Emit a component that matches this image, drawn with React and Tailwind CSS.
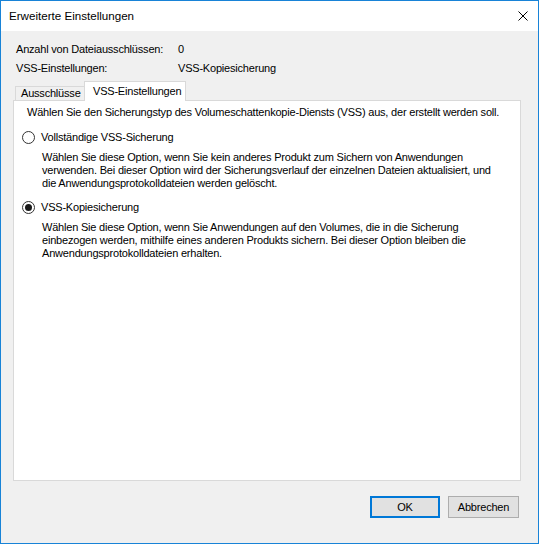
import React from 'react';

const font = "font-['Liberation_Sans',Arial,sans-serif]";

function Radio({ checked }) {
  return (
    <span className="flex h-[13px] w-[13px] shrink-0 items-center justify-center rounded-full border border-[#333333] bg-white">
      {checked ? <span className="h-[7px] w-[7px] rounded-full bg-[#1a1a1a]" /> : null}
    </span>
  );
}

function Option({ checked, label, lines }) {
  return (
    <div>
      <div className="flex items-center gap-[6px]">
        <Radio checked={checked} />
        <span className="whitespace-nowrap leading-[13px]">{label}</span>
      </div>
      <div className="mt-[7px] pl-[20px] leading-[13px]">
        {lines.map((l) => (
          <div key={l} className="whitespace-nowrap">{l}</div>
        ))}
      </div>
    </div>
  );
}

export default function App() {
  return (
    <div className={`flex h-[544px] w-[539px] flex-col border border-[#1883d7] bg-[#f0f0f0] text-[11px] tracking-[-0.2px] text-black ${font}`}>
      {/* title bar */}
      <div className="flex h-[30px] shrink-0 items-center justify-between bg-white pl-[8px] pr-[10px]">
        <span className="whitespace-nowrap text-[11.6px] tracking-normal">Erweiterte Einstellungen</span>
        <svg width="10" height="10" viewBox="0 0 10 10" className="block">
          <path d="M0.5 0.5 L9.5 9.5 M9.5 0.5 L0.5 9.5" stroke="#000" strokeWidth="1" fill="none" />
        </svg>
      </div>

      <div className="flex flex-1 flex-col pl-[12px] pr-[17px] pt-[12px]">
        <div className="whitespace-nowrap pl-[3px] leading-[13px]">
          <div className="flex">
            <span className="w-[162px] shrink-0">Anzahl von Dateiausschlüssen:</span>
            <span>0</span>
          </div>
          <div className="mt-[6px] flex">
            <span className="w-[162px] shrink-0">VSS-Einstellungen:</span>
            <span>VSS-Kopiesicherung</span>
          </div>
        </div>

        {/* tabs */}
        <div className="relative z-10 mt-[6px] flex h-[19px] items-end whitespace-nowrap pl-[2px]">
          <div className="flex h-[14px] w-[70px] shrink-0 items-center border border-b-0 border-[#d9d9d9] bg-[#f0f0f0] pl-[5px] leading-[13px]">
            Ausschlüsse
          </div>
          <div className="-mb-[1px] -ml-[1px] flex h-[20px] w-[102px] shrink-0 items-center border border-b-0 border-[#d9d9d9] bg-white pl-[8px] leading-[13px]">
            VSS-Einstellungen
          </div>
        </div>

        {/* panel */}
        <div className="h-[381px] shrink-0 border border-[#d9d9d9] bg-white pl-[8px] pt-[5px]">
          <div className="whitespace-nowrap pl-[5px] leading-[13px]">
            Wählen Sie den Sicherungstyp des Volumeschattenkopie-Diensts (VSS) aus, der erstellt werden soll.
          </div>
          <div className="mt-[12px]">
            <Option
              label="Vollständige VSS-Sicherung"
              lines={[
                'Wählen Sie diese Option, wenn Sie kein anderes Produkt zum Sichern von Anwendungen',
                'verwenden. Bei dieser Option wird der Sicherungsverlauf der einzelnen Dateien aktualisiert, und',
                'die Anwendungsprotokolldateien werden gelöscht.',
              ]}
            />
          </div>
          <div className="mt-[11px]">
            <Option
              checked
              label="VSS-Kopiesicherung"
              lines={[
                'Wählen Sie diese Option, wenn Sie Anwendungen auf den Volumes, die in die Sicherung',
                'einbezogen werden, mithilfe eines anderen Produkts sichern. Bei dieser Option bleiben die',
                'Anwendungsprotokolldateien erhalten.',
              ]}
            />
          </div>
        </div>

        {/* buttons */}
        <div className="mt-[15px] flex justify-end gap-[8px] pr-[2px]">
          <button className="h-[22px] w-[70px] border-2 border-[#0078d7] bg-[#e1e1e1] leading-[13px]">OK</button>
          <button className="h-[22px] w-[71px] border border-[#adadad] bg-[#e1e1e1] leading-[13px]">Abbrechen</button>
        </div>
      </div>
    </div>
  );
}
